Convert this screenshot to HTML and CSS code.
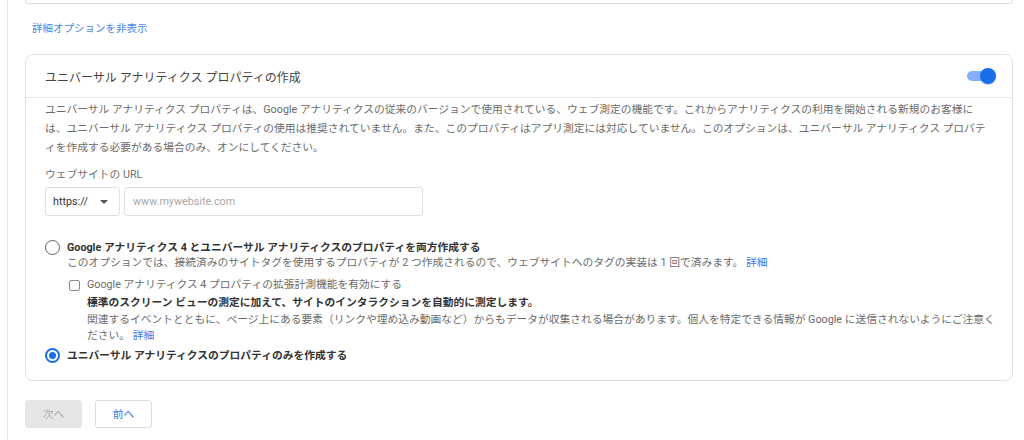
FILE: index.html
```html
<!DOCTYPE html>
<html lang="ja">
<head>
<meta charset="utf-8">
<link rel="stylesheet" href="styles.css">
</head>
<body>
<div class="page">
  <div class="prev-card"></div>
  <a class="toggle-link" href="#">詳細オプションを非表示</a>
  <section class="card">
    <header class="card-head">
      <h2 class="card-title">ユニバーサル アナリティクス プロパティの作成</h2>
      <span class="switch"><span class="switch-track"></span><span class="switch-thumb"></span></span>
    </header>
    <div class="card-body">
      <p class="desc">ユニバーサル アナリティクス プロパティは、Google アナリティクスの従来のバージョンで使用されている、ウェブ測定の機能です。これからアナリティクスの利用を開始される新規のお客様に<br>は、ユニバーサル アナリティクス プロパティの使用は推奨されていません。また、このプロパティはアプリ測定には対応していません。このオプションは、ユニバーサル アナリティクス プロパテ<br>ィを作成する必要がある場合のみ、オンにしてください。</p>
      <div class="field-label">ウェブサイトの URL</div>
      <div class="url-row">
        <div class="select"><span>https://</span><span class="caret"></span></div>
        <div class="input">www.mywebsite.com</div>
      </div>
      <div class="options">
        <div class="option">
          <span class="radio"></span>
          <div class="option-body">
            <div class="option-title">Google アナリティクス 4 とユニバーサル アナリティクスのプロパティを両方作成する</div>
            <div class="option-desc">このオプションでは、接続済みのサイトタグを使用するプロパティが 2 つ作成されるので、ウェブサイトへのタグの実装は 1 回で済みます。 <a href="#" class="link">詳細</a></div>
            <div class="check-row">
              <span class="checkbox"></span>
              <span class="check-label">Google アナリティクス 4 プロパティの拡張計測機能を有効にする</span>
            </div>
            <div class="sub">
              <div class="sub-title">標準のスクリーン ビューの測定に加えて、サイトのインタラクションを自動的に測定します。</div>
              <div class="sub-desc">関連するイベントとともに、ページ上にある要素（リンクや埋め込み動画など）からもデータが収集される場合があります。個人を特定できる情報が Google に送信されないようにご注意く<br>ださい。 <a href="#" class="link">詳細</a></div>
            </div>
          </div>
        </div>
        <div class="option option-2">
          <span class="radio radio-on"></span>
          <div class="option-body">
            <div class="option-title">ユニバーサル アナリティクスのプロパティのみを作成する</div>
          </div>
        </div>
      </div>
    </div>
  </section>
  <div class="actions">
    <button class="btn btn-disabled" type="button">次へ</button>
    <button class="btn btn-outline" type="button">前へ</button>
  </div>
</div>
</body>
</html>
```

FILE: styles.css
```css
* { box-sizing: border-box; }
html, body { margin: 0; padding: 0; background: #fff; }
body {
  font-family: Roboto, "Noto Sans CJK JP", sans-serif;
  font-size: 10.75px;
  color: #666;
  width: 1024px;
  height: 440px;
  overflow: hidden;
}
.page {
  margin-left: 7px;
  border-left: 1px solid #e6e6e6;
  height: 440px;
  padding: 0 11px 0 17px;
}
.prev-card {
  height: 4px;
  border: 1px solid #e0e0e0;
  border-top: none;
  border-radius: 0 0 7px 7px;
}
.toggle-link {
  display: block;
  margin: 17px 0 0 7px;
  font-size: 10.5px;
  line-height: 16px;
  color: #4a86e8;
  text-decoration: none;
}
.card {
  margin-top: 17px;
  border: 1px solid #e0e0e0;
  border-radius: 8px;
}
.card-head {
  height: 43px;
  border-bottom: 1px solid #e6e6e6;
  display: flex;
  align-items: center;
  justify-content: space-between;
  padding: 0 16px 0 19px;
}
.card-title {
  margin: 0;
  font-size: 12px;
  font-weight: normal;
  color: #444;
}
.switch {
  position: relative;
  width: 29px;
  height: 16px;
  display: block;
}
.switch-track {
  position: absolute;
  left: 0;
  top: 3px;
  width: 24px;
  height: 10px;
  border-radius: 5px;
  background: #86aef6;
}
.switch-thumb {
  position: absolute;
  right: 0;
  top: 0;
  width: 16px;
  height: 16px;
  border-radius: 50%;
  background: #1a6ee8;
  box-shadow: 0 1px 1px rgba(0,0,0,0.2);
}
.card-body {
  padding: 2px 19px 17px 19px;
}
.desc {
  margin: 0;
  line-height: 19px;
  color: #6b6b6b;
  white-space: nowrap;
}
.field-label {
  margin-top: 10px;
  line-height: 16px;
  color: #707070;
}
.url-row {
  display: flex;
  gap: 4px;
  margin-top: 4px;
}
.select, .input {
  height: 29px;
  border: 1px solid #e0e0e0;
  border-radius: 3px;
  display: flex;
  align-items: center;
}
.select {
  width: 75px;
  padding: 0 0 0 7px;
  justify-content: space-between;
  color: #333;
}
.caret {
  width: 0;
  height: 0;
  border-left: 4px solid transparent;
  border-right: 4px solid transparent;
  border-top: 4px solid #555;
  margin-right: 11px;
}
.input {
  width: 299px;
  padding-left: 8px;
  color: #a8a8a8;
}
.options {
  margin-top: 24px;
}
.option {
  display: flex;
  gap: 7px;
}
.radio {
  flex: none;
  width: 15px;
  height: 15px;
  border: 1.6px solid #5f5f5f;
  border-radius: 50%;
  position: relative;
}
.radio-on {
  border: 2px solid #1a6ee8;
}
.radio-on::after {
  content: "";
  position: absolute;
  left: 2px;
  top: 2px;
  width: 7px;
  height: 7px;
  border-radius: 50%;
  background: #1a6ee8;
}
.option-title {
  line-height: 15px;
  font-weight: bold;
  color: #333;
}
.option-desc {
  line-height: 15px;
  color: #6b6b6b;
}
.link {
  color: #3b78e7;
  text-decoration: none;
}
.check-row {
  display: flex;
  align-items: center;
  gap: 7px;
  margin: 7px 0 0 2px;
  line-height: 16px;
}
.checkbox {
  width: 11px;
  height: 11px;
  border: 1px solid #8a8a8a;
  border-radius: 2px;
}
.check-label {
  color: #6b6b6b;
}
.sub {
  margin: 2px 0 0 20px;
  line-height: 16.5px;
}
.sub-title {
  font-weight: bold;
  color: #333;
}
.sub-desc {
  color: #6b6b6b;
  white-space: nowrap;
}
.option-2 {
  margin-top: 3px;
  align-items: center;
}
.actions {
  display: flex;
  gap: 13px;
  margin-top: 19px;
}
.btn {
  width: 57px;
  height: 28px;
  border-radius: 3px;
  font-family: Roboto, "Noto Sans CJK JP", sans-serif;
  font-size: 10.75px;
  padding: 0;
}
.btn-disabled {
  background: #e6e6e6;
  border: 1px solid #e6e6e6;
  color: #ababab;
}
.btn-outline {
  background: #fff;
  border: 1px solid #dadce0;
  color: #3b78e7;
}
```
